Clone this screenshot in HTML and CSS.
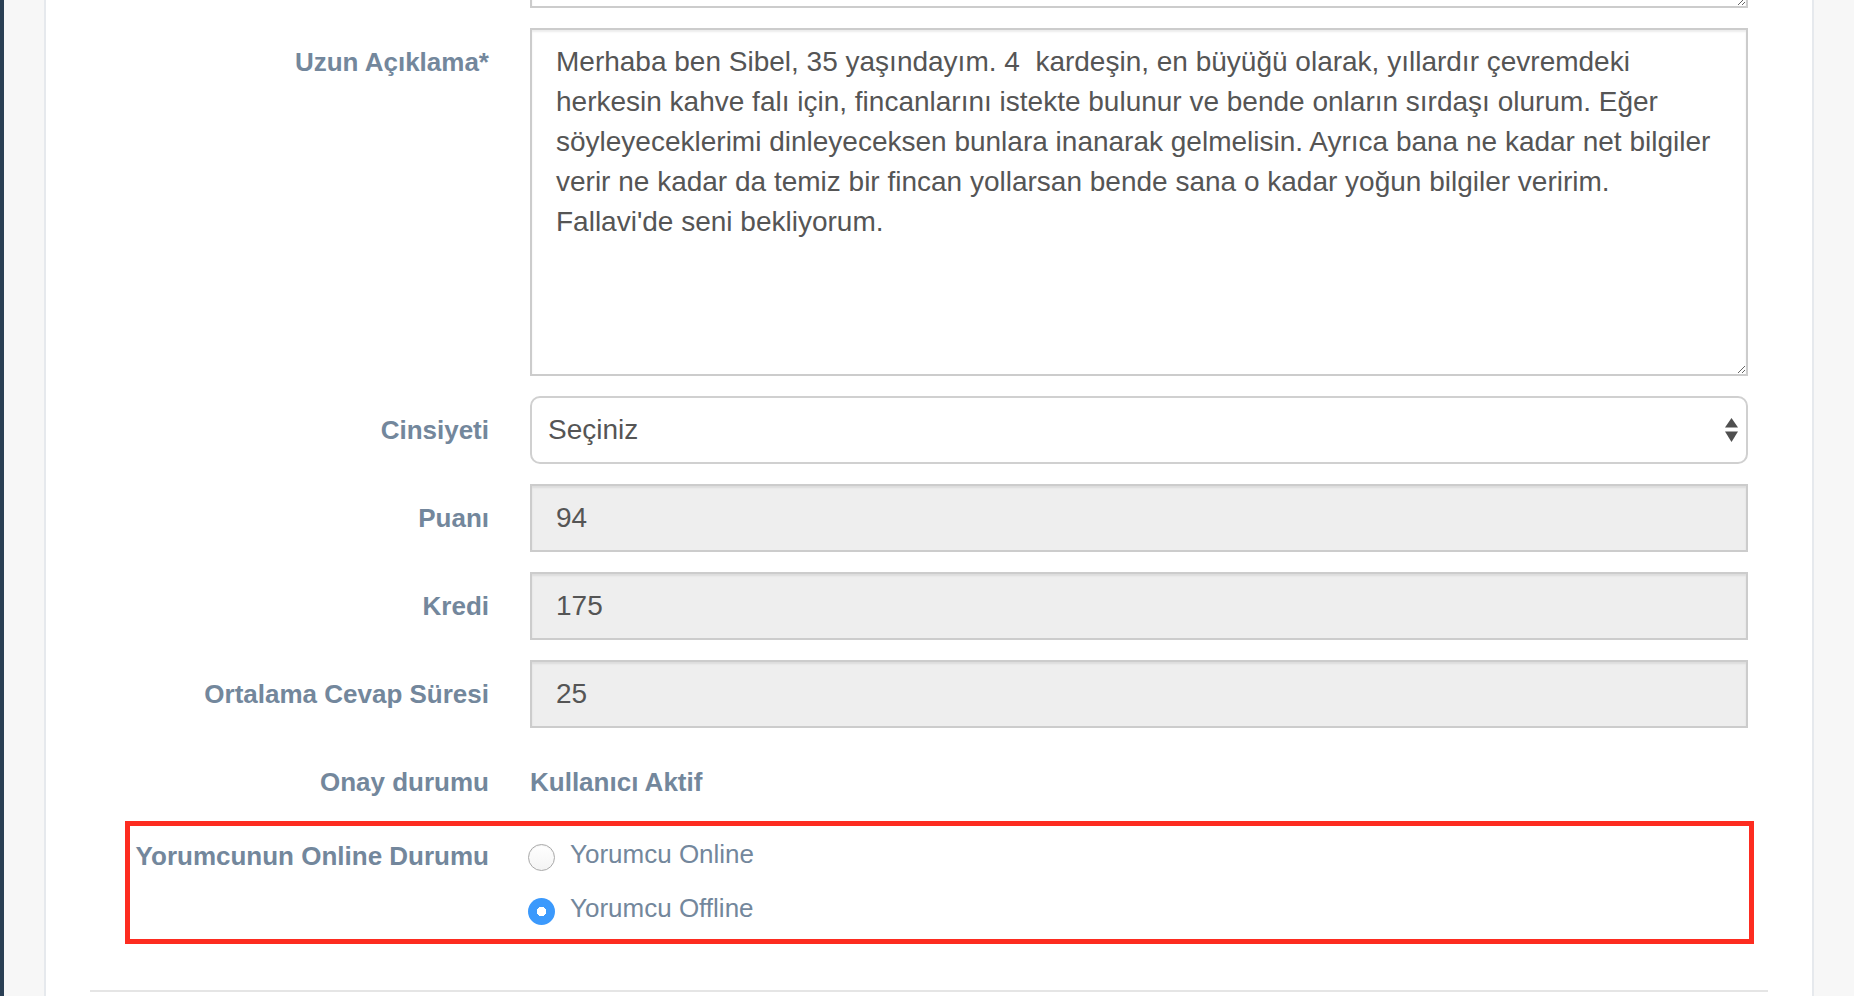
FILE: index.html
```html
<!DOCTYPE html>
<html lang="tr">
<head>
<meta charset="utf-8">
<title>Yorumcu Düzenle</title>
<link rel="stylesheet" href="styles.css">
</head>
<body>
<div class="layout">
  <div class="nav-edge"></div>
  <div class="content">
    <div class="panel">
      <form class="form">
        <div class="group">
          <div class="label"></div>
          <div class="field"><textarea class="control textarea" aria-label="Kısa açıklama"></textarea></div>
        </div>

        <div class="group">
          <label class="label" for="uzun">Uzun Açıklama*</label>
          <div class="field"><textarea id="uzun" class="control textarea">Merhaba ben Sibel, 35 yaşındayım. 4  kardeşin, en büyüğü olarak, yıllardır çevremdeki
herkesin kahve falı için, fincanlarını istekte bulunur ve bende onların sırdaşı olurum. Eğer
söyleyeceklerimi dinleyeceksen bunlara inanarak gelmelisin. Ayrıca bana ne kadar net bilgiler
verir ne kadar da temiz bir fincan yollarsan bende sana o kadar yoğun bilgiler veririm.
Fallavi'de seni bekliyorum.</textarea></div>
        </div>

        <div class="group">
          <label class="label" for="cinsiyet">Cinsiyeti</label>
          <div class="field select-wrap">
            <select id="cinsiyet" class="control select">
              <option>Seçiniz</option>
              <option>Kadın</option>
              <option>Erkek</option>
            </select>
            <svg class="select-arrows" viewBox="0 0 13 24" width="13" height="24" aria-hidden="true">
              <polygon points="6.5,0 13,9.5 0,9.5"/>
              <polygon points="0,13.5 13,13.5 6.5,24"/>
            </svg>
          </div>
        </div>

        <div class="group">
          <label class="label" for="puan">Puanı</label>
          <div class="field"><input id="puan" class="control" type="text" value="94" readonly></div>
        </div>

        <div class="group">
          <label class="label" for="kredi">Kredi</label>
          <div class="field"><input id="kredi" class="control" type="text" value="175" readonly></div>
        </div>

        <div class="group">
          <label class="label" for="sure">Ortalama Cevap Süresi</label>
          <div class="field"><input id="sure" class="control" type="text" value="25" readonly></div>
        </div>

        <div class="group">
          <div class="label">Onay durumu</div>
          <div class="field"><p class="static">Kullanıcı Aktif</p></div>
        </div>

        <div class="group group-radio">
          <div class="label">Yorumcunun Online Durumu</div>
          <div class="field">
            <div class="radio">
              <label><input type="radio" name="online" value="1"> Yorumcu Online</label>
            </div>
            <div class="radio">
              <label><input type="radio" name="online" value="0" checked> Yorumcu Offline</label>
            </div>
          </div>
          <div class="highlight"></div>
        </div>

        <div class="ln-solid"></div>
      </form>
    </div>
  </div>
</div>
</body>
</html>
```

FILE: styles.css
```css
html, body {
  margin: 0;
  padding: 0;
  overflow: hidden;
}

body {
  background: #f7f7f7;
  font-family: "Liberation Sans", Arial, Helvetica, sans-serif;
  color: #73879c;
}

.layout {
  display: flex;
  min-height: 100vh;
}

.nav-edge {
  flex: 0 0 4px;
  background: #2a3f54;
}

.content {
  flex: 1 1 auto;
  display: flex;
  padding: 0 40px;
}

.panel {
  flex: 1 1 auto;
  margin-top: -340px;
  background: #fff;
  border-left: 2px solid #e6e9ed;
  border-right: 2px solid #e6e9ed;
  padding: 0 44px 40px;
}

.form {
  margin: 0;
}

.group {
  display: grid;
  grid-template-columns: 399px 1218px;
  column-gap: 41px;
  margin-bottom: 20px;
}

.label {
  display: block;
  text-align: right;
  font-weight: bold;
  font-size: 26px;
  line-height: 40px;
  padding-top: 14px;
  color: #73879c;
}

.field {
  min-width: 0;
}

.control {
  display: block;
  width: 100%;
  box-sizing: border-box;
  height: 68px;
  margin: 0;
  border: 2px solid #ccc;
  border-radius: 0;
  background: #eee;
  color: #555;
  font-family: "Liberation Sans", Arial, Helvetica, sans-serif;
  font-size: 28px;
  line-height: 40px;
  padding: 12px 24px;
  box-shadow: inset 0 2px 2px rgba(0, 0, 0, 0.075);
  outline: none;
}

.textarea {
  height: 348px;
  background: #fff;
  padding: 12px 12px 12px 24px;
  resize: vertical;
  white-space: pre-wrap;
}

.select-wrap {
  position: relative;
}

.select {
  -webkit-appearance: none;
  appearance: none;
  background: #fff;
  border-color: #d0d0d0;
  border-radius: 10px;
  padding: 12px 40px 12px 16px;
  box-shadow: none;
}

.select-arrows {
  position: absolute;
  right: 10px;
  top: 22px;
  fill: #4f4f4f;
  pointer-events: none;
}

.static {
  margin: 0;
  padding-top: 14px;
  font-size: 26px;
  line-height: 40px;
  font-weight: bold;
  color: #73879c;
}

.group-radio {
  position: relative;
}

.radio {
  position: relative;
  box-sizing: border-box;
  min-height: 54px;
  padding-top: 12px;
}

.radio label {
  display: block;
  padding-left: 40px;
  font-size: 26px;
  line-height: 40px;
  color: #73879c;
  cursor: pointer;
}

.radio input {
  -webkit-appearance: none;
  appearance: none;
  position: absolute;
  left: -2px;
  top: 22px;
  width: 27px;
  height: 27px;
  margin: 0;
  box-sizing: border-box;
  border-radius: 50%;
  border: 1.5px solid #a9a9a9;
  background: linear-gradient(#fff, #f4f4f4);
  box-shadow: inset 0 1px 1px rgba(0, 0, 0, 0.06);
}

.radio input:checked {
  border: 0;
  background: radial-gradient(circle, #fff 0 4.5px, #3b99fc 5px);
  box-shadow: none;
}

.highlight {
  position: absolute;
  left: 35px;
  right: 14px;
  top: -1px;
  height: 123px;
  box-sizing: border-box;
  border: 5px solid #fd2c20;
  pointer-events: none;
}

.ln-solid {
  margin-top: 60px;
  border-top: 2px solid #e5e5e5;
  height: 0;
}
```
